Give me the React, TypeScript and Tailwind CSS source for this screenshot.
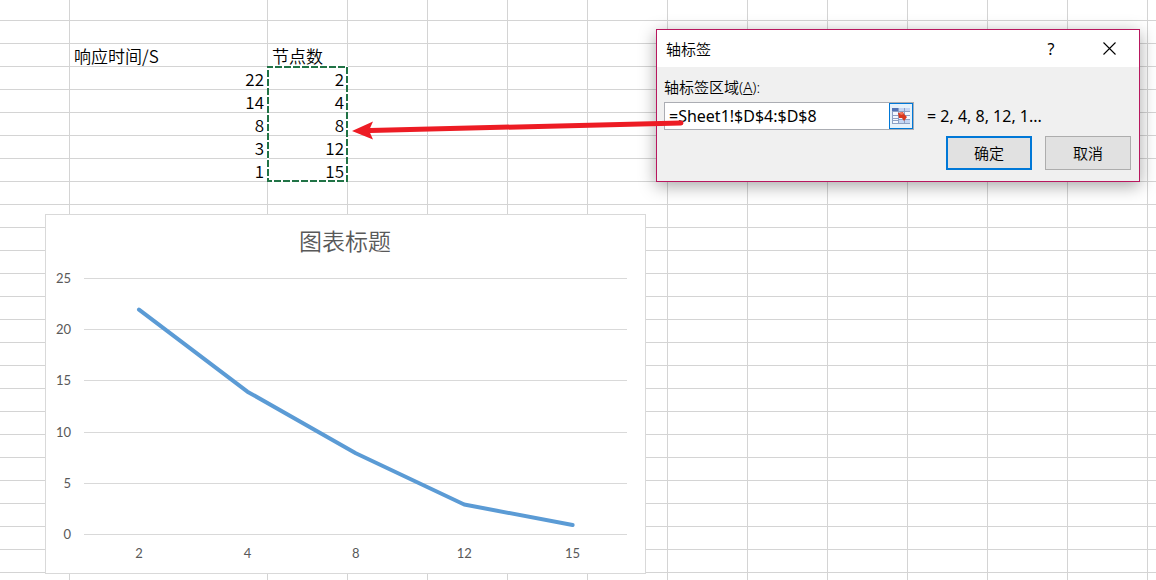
import { useState } from "react";

const BLANK_COLUMNS = 10;
const ROW_COUNT = 26;

// keyed by row index in the sheet
const CELLS: Record<number, { time: string; nodes: string }> = {
  2: { time: "响应时间/S", nodes: "节点数" },
  3: { time: "22", nodes: "2" },
  4: { time: "14", nodes: "4" },
  5: { time: "8", nodes: "8" },
  6: { time: "3", nodes: "12" },
  7: { time: "1", nodes: "15" },
};

const POINTS = [
  { label: "2", value: 22 },
  { label: "4", value: 14 },
  { label: "8", value: 8 },
  { label: "12", value: 3 },
  { label: "15", value: 1 },
];

const TICKS = [25, 20, 15, 10, 5, 0];

function Sheet() {
  const line = "border-b border-r border-[#d4d4d4] p-0";

  return (
    <table className="w-full table-fixed border-separate border-spacing-0 text-[17px] leading-5 font-[350] text-black">
      <colgroup>
        <col className="w-[70px]" />
        <col className="w-[198px]" />
        {Array.from({ length: BLANK_COLUMNS + 1 }, (_, i) => (
          <col key={i} className="w-[80px]" />
        ))}
        <col />
      </colgroup>
      <tbody>
        {Array.from({ length: ROW_COUNT }, (_, row) => {
          const cell = CELLS[row];
          const align = row === 2 ? "align-bottom text-left pl-1" : "align-bottom text-right pr-[3px]";
          return (
            <tr key={row} className={row === 0 ? "h-[21px]" : "h-[23px]"}>
              <td className={line} />
              <td className={`${line} ${cell ? align : ""}`}>{cell?.time}</td>
              <td className={`${line} ${cell ? align : ""}`}>{cell?.nodes}</td>
              {Array.from({ length: BLANK_COLUMNS }, (_, i) => (
                <td key={i} className={line} />
              ))}
              <td className="border-b border-[#d4d4d4] p-0" />
            </tr>
          );
        })}
      </tbody>
    </table>
  );
}

function Marquee() {
  return (
    <svg className="absolute top-[66px] left-[267px]" width="81" height="116" aria-hidden="true">
      <rect x="1" y="1" width="79" height="114" fill="none" stroke="#fff" strokeWidth="2" />
      <rect x="1" y="1" width="79" height="114" fill="none" stroke="#217346" strokeWidth="2" strokeDasharray="7 2" strokeDashoffset="2" />
    </svg>
  );
}

function LineChart() {
  const x = (i: number) => 93 + i * 108.4;
  const y = (value: number) => 320.3 - value * 10.26;

  return (
    <figure className="absolute top-[214px] left-[45px] border border-[#d9d9d9] bg-white">
      <svg width="599" height="358" role="img" aria-label="图表标题">
        <text x="299" y="35" textAnchor="middle" className="fill-[#595959] text-[23px] font-[350]">
          图表标题
        </text>
        {TICKS.map((tick) => (
          <g key={tick}>
            <line x1="38" x2="581" y1={Math.round(y(tick)) - 0.5} y2={Math.round(y(tick)) - 0.5} stroke="#d9d9d9" />
            <text x="25" y={Math.round(y(tick)) + 4} textAnchor="end" className="fill-[#595959] font-[Lato] text-[13px]">
              {tick}
            </text>
          </g>
        ))}
        {POINTS.map((point, i) => (
          <text key={point.label} x={x(i)} y="343" textAnchor="middle" className="fill-[#595959] font-[Lato] text-[13px]">
            {point.label}
          </text>
        ))}
        <polyline
          points={POINTS.map((point, i) => `${x(i)},${y(point.value)}`).join(" ")}
          fill="none"
          stroke="#5b9bd5"
          strokeWidth="4"
          strokeLinecap="round"
          strokeLinejoin="round"
        />
      </svg>
    </figure>
  );
}

function RangePickerIcon() {
  return (
    <svg width="18" height="18" viewBox="0 0 18 18" aria-hidden="true">
      <rect y="1" width="18" height="16" fill="#8da0c4" />
      <rect y="1" width="6" height="3" fill="#5273b5" />
      <path d="M7 1h5v3H7zM13 1h5v3h-5z" fill="#c4d5f3" />
      <path d="M1 5h5v3H1zM1 9h5v2H1zM1 12h5v1H1zM1 14h5v2H1zM7 5h5v3H7zM7 9h5v3H7zM13 5h5v3h-5zM13 9h5v3h-5z" fill="#f4f8ff" />
      <path d="M7 13h5v3H7zM13 13h5v3h-5z" fill="#c4d5f3" />
      <path d="M6 6l5-1 1 2 3 3-3 4-2-3-3 0z" fill="#d9381e" />
      <path d="M7 6l3-1 2 2-3 1z" fill="#f0745a" />
    </svg>
  );
}

function AxisLabelDialog() {
  const [range, setRange] = useState("=Sheet1!$D$4:$D$8");

  return (
    <div
      role="dialog"
      aria-labelledby="dialog-title"
      className="absolute top-[29px] left-[656px] w-[484px] border border-[#b8175e] bg-[#f0f0f0] font-['Noto_Sans','Noto_Sans_CJK_SC',sans-serif] text-[15px] leading-5 text-black shadow-[0_4px_16px_rgba(0,0,0,0.35)]"
    >
      <div className="flex h-[37px] items-center bg-white pl-[9px]">
        <h1 id="dialog-title" className="flex-1 font-[350]">
          轴标签
        </h1>
        <button type="button" aria-label="帮助" className="w-14 text-center text-base">
          ?
        </button>
        <button type="button" aria-label="关闭" className="flex w-[60px] justify-center">
          <svg width="13" height="13" viewBox="0 0 13 13" aria-hidden="true">
            <path d="M0.5 0.5l12 12M12.5 0.5l-12 12" stroke="#000" strokeWidth="1.1" />
          </svg>
        </button>
      </div>
      <form className="pt-[10px] pr-2 pb-[11px] pl-[7px]" onSubmit={(e) => e.preventDefault()}>
        <label htmlFor="range" className="block font-[350]">
          轴标签区域(<u>A</u>):
        </label>
        <div className="mt-[5px] flex items-center">
          <div className="flex h-7 w-[250px] border border-[#abadb3] bg-white">
            <input
              id="range"
              value={range}
              onChange={(e) => setRange(e.target.value)}
              className="min-w-0 flex-1 bg-transparent pl-1 text-base outline-none"
            />
            <button
              type="button"
              aria-label="选择区域"
              className="flex w-6 items-center justify-center border border-[#0078d7] bg-[#e5f1fb]"
            >
              <RangePickerIcon />
            </button>
          </div>
          <span className="pl-[13px] text-base">= 2, 4, 8, 12, 1...</span>
        </div>
        <div className="mt-[6px] flex justify-end gap-[13px] font-[350]">
          <button type="submit" className="h-[34px] w-[86px] border-2 border-[#0078d7] bg-[#e1e1e1]">
            确定
          </button>
          <button type="button" className="h-[34px] w-[86px] border border-[#adadad] bg-[#e1e1e1]">
            取消
          </button>
        </div>
      </form>
    </div>
  );
}

function Arrow() {
  return (
    <svg className="pointer-events-none absolute top-[116px] left-[352px]" width="336" height="28" aria-hidden="true">
      <path d="M18 14.5L329 7" stroke="#ed1c24" strokeWidth="5" strokeLinecap="round" />
      <path d="M0 15L21 5.5L17 14.5L21 23.5Z" fill="#ed1c24" />
    </svg>
  );
}

export default function App() {
  return (
    <main className="relative h-screen overflow-hidden bg-white font-['Noto_Sans_CJK_SC',sans-serif]">
      <Sheet />
      <Marquee />
      <LineChart />
      <AxisLabelDialog />
      <Arrow />
    </main>
  );
}
